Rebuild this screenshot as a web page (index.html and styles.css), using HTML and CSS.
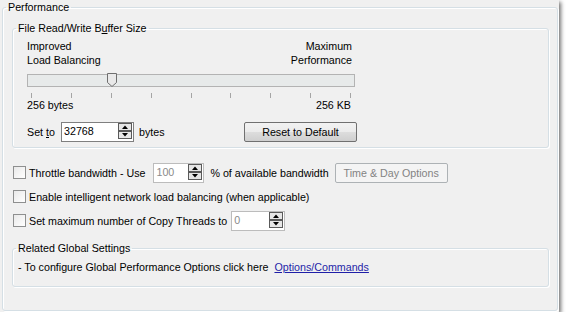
FILE: index.html
```html
<!DOCTYPE html>
<html lang="en">
<head>
    <meta charset="UTF-8">
    <title>Performance</title>
    <link rel="stylesheet" href="styles.css">
</head>
<body>
<div class="window">
    <fieldset class="group outer">
        <legend>Performance</legend>
        <div class="outer-body">
            <fieldset class="group">
                <legend>File Read/Write B<u>u</u>ffer Size</legend>
                <div class="buffer-body">
                    <div class="slider">
                        <div class="slider-labels">
                            <span>Improved<br>Load Balancing</span>
                            <span class="right">Maximum<br>Performance</span>
                        </div>
                        <div class="track">
                            <svg class="thumb" width="10" height="14" viewBox="0 0 10 14">
                                <path d="M0.5 0.5 H9.5 V9.5 L5 13.5 L0.5 9.5 Z" fill="#e9e9e9" stroke="#6f6f6f"/>
                            </svg>
                        </div>
                        <div class="ticks">
                            <i></i><i></i><i></i><i></i><i></i><i></i><i></i><i></i><i></i>
                        </div>
                        <div class="scale">
                            <span>256 bytes</span>
                            <span>256 KB</span>
                        </div>
                    </div>
                    <div class="set-row">
                        <span class="set-label">Set <u>t</u>o</span>
                        <div class="spin-box wide">
                            <span>32768</span>
                            <svg width="14" height="16" viewBox="0 0 14 16">
                                <rect x="0.5" y="0.5" width="13" height="7" fill="#e6e6e6" stroke="#5a5a5a"/>
                                <rect x="0.5" y="8.5" width="13" height="7" fill="#e6e6e6" stroke="#5a5a5a"/>
                                <path d="M4 6 L7 2.5 L10 6 Z" fill="#000"/>
                                <path d="M4 10 L10 10 L7 13.5 Z" fill="#000"/>
                            </svg>
                        </div>
                        <span class="unit">bytes</span>
                        <button class="btn">Reset to Default</button>
                    </div>
                </div>
            </fieldset>

            <div class="options">
                <div class="opt-row">
                    <span class="check"></span>
                    <span>Throttle bandwidth - Use</span>
                    <div class="spin-box disabled pct">
                        <span>100</span>
                        <svg width="14" height="16" viewBox="0 0 14 16">
                            <rect x="0.5" y="0.5" width="13" height="7" fill="#e6e6e6" stroke="#5a5a5a"/>
                            <rect x="0.5" y="8.5" width="13" height="7" fill="#e6e6e6" stroke="#5a5a5a"/>
                            <path d="M4 6 L7 2.5 L10 6 Z" fill="#000"/>
                            <path d="M4 10 L10 10 L7 13.5 Z" fill="#000"/>
                        </svg>
                    </div>
                    <span class="after">% of available bandwidth</span>
                    <button class="btn off">Time &amp; Day Options</button>
                </div>
                <div class="opt-row">
                    <span class="check"></span>
                    <span>Enable intelligent network load balancing (when applicable)</span>
                </div>
                <div class="opt-row">
                    <span class="check"></span>
                    <span>Set maximum number of Copy Threads to</span>
                    <div class="spin-box disabled threads">
                        <span>0</span>
                        <svg width="14" height="16" viewBox="0 0 14 16">
                            <rect x="0.5" y="0.5" width="13" height="7" fill="#e6e6e6" stroke="#5a5a5a"/>
                            <rect x="0.5" y="8.5" width="13" height="7" fill="#e6e6e6" stroke="#5a5a5a"/>
                            <path d="M4 6 L7 2.5 L10 6 Z" fill="#000"/>
                            <path d="M4 10 L10 10 L7 13.5 Z" fill="#000"/>
                        </svg>
                    </div>
                </div>
            </div>

            <fieldset class="group related">
                <legend>Related Global Settings</legend>
                <div class="related-body">
                    - To configure Global Performance Options click here
                    <a href="#">Options/Commands</a>
                </div>
            </fieldset>
        </div>
    </fieldset>
</div>
</body>
</html>
```

FILE: styles.css
```css
body {
    margin: 0;
    background: #fff;
    font-family: "Liberation Sans", Arial, sans-serif;
    font-size: 10.7px;
    line-height: 14px;
    color: #000;
}
.window {
    width: 559px;
    height: 312px;
    box-sizing: border-box;
    padding: 0 1px 1px 2px;
    background: #f0f0f0;
    box-shadow: 2px 2px 4px rgba(0, 0, 0, 0.55);
}
.group {
    margin: 0;
    padding: 0;
    border: 1px solid #d5dfe5;
    border-radius: 3px;
    box-shadow: inset 1px 1px 0 #fff, 1px 1px 0 #fff;
}
.group legend {
    margin-left: 3px;
    padding: 0 2px;
    line-height: 14px;
}
.outer {
    height: 100%;
    box-sizing: border-box;
}
.outer-body {
    padding: 7px 8px 0 9px;
}

/* buffer size box */
.buffer-body {
    padding: 4px 0 5px 14px;
}
.slider {
    width: 328px;
}
.slider-labels {
    display: flex;
    justify-content: space-between;
    padding-right: 3px;
}
.slider-labels .right {
    text-align: right;
}
.track {
    position: relative;
    height: 13px;
    margin-top: 7px;
    box-sizing: border-box;
    border: 1px solid #b3b3b3;
    background: #e7eaea;
}
.thumb {
    position: absolute;
    left: 79px;
    top: -2px;
}
.ticks {
    display: flex;
    justify-content: space-between;
    height: 5px;
    margin-top: 6px;
    padding: 0 4px 0 4px;
}
.ticks i {
    width: 1px;
    background: #a5a5a5;
}
.scale {
    display: flex;
    justify-content: space-between;
    padding-right: 4px;
}
.set-row {
    display: flex;
    align-items: center;
    width: 330px;
    margin-top: 10px;
}
.set-label {
    width: 34px;
}
.unit {
    margin-left: 5px;
}
.spin-box {
    display: flex;
    align-items: flex-start;
    justify-content: space-between;
    height: 20px;
    box-sizing: border-box;
    border: 1px solid #7f7f7f;
    background: #fff;
    padding: 0 1px 0 2px;
    line-height: 17px;
}
.spin-box.wide {
    width: 73px;
}
.spin-box.disabled {
    border-color: #bcbcbc;
    color: #8a8a8a;
}
.btn {
    height: 20px;
    width: 113px;
    padding: 0;
    border: 1px solid #707070;
    border-radius: 2px;
    background: linear-gradient(#f2f2f2, #ebebeb 50%, #dddddd 50%, #cfcfcf);
    font-family: "Liberation Sans", Arial, sans-serif;
    font-size: 10.7px;
    color: #000;
}
.set-row .btn {
    margin-left: auto;
}
.btn.off {
    border-color: #adb2b5;
    background: #f4f4f4;
    color: #838383;
}

/* check rows */
.options {
    padding: 14px 0 0 1px;
}
.opt-row {
    display: flex;
    align-items: center;
    height: 21px;
    margin-bottom: 3px;
}
.check {
    width: 13px;
    height: 13px;
    box-sizing: border-box;
    border: 1px solid #8e8f8f;
    background: linear-gradient(135deg, #e9e9e9, #fff);
    margin-right: 3px;
}
.pct {
    width: 51px;
    margin-left: 8px;
}
.after {
    margin-left: 6px;
}
.opt-row .off {
    margin-left: 6px;
}
.threads {
    width: 54px;
    margin-left: 4px;
}

/* related */
.related {
    width: 537px;
    box-sizing: border-box;
    margin-top: 10px;
}
.related-body {
    padding: 5px 0 12px 5px;
}
.related-body a {
    margin-left: 3px;
    color: #1f1fa8;
}
```
